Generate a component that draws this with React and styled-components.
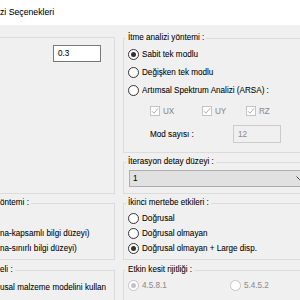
import React from "react";
import styled, { createGlobalStyle } from "styled-components";

const GlobalStyle = createGlobalStyle`
  html, body {
    margin: 0;
    padding: 0;
    background: #f0f0f0;
    overflow: hidden;
  }
  body {
    font-family: "Liberation Sans", Arial, sans-serif;
    font-size: 8.15px;
    color: #000;
    -webkit-text-stroke: 0.06px currentColor;
  }
`;

const Window = styled.div`
  width: 300px;
  height: 300px;
  overflow: hidden;
  background: #f0f0f0;
`;

const TitleBar = styled.div`
  height: 25px;
  box-sizing: border-box;
  background: #fff;
  display: flex;
  align-items: center;
  padding-bottom: 1px;
  font-size: 8.7px;
  white-space: nowrap;
`;

const Body = styled.div`
  display: flex;
  gap: 8px;
  margin-left: -5px;
`;

const Column = styled.div`
  display: flex;
  flex-direction: column;
  flex-shrink: 0;
  width: ${props => props.$w}px;
  padding-top: ${props => props.$top}px;
`;

const Group = styled.fieldset`
  margin: ${props => props.$mt || 0}px 0 0 0;
  padding: ${props => props.$pt || 2}px 5px 0 4px;
  border: 1px solid #dcdcdc;
  height: ${props => props.$h}px;
  box-sizing: border-box;
  min-width: 0;
  overflow: hidden;
`;

const Legend = styled.legend`
  padding: 0 2px;
  margin-left: -2px;
  height: 10px;
  line-height: 10px;
  white-space: nowrap;
`;

const Row = styled.div`
  display: flex;
  align-items: center;
  gap: 3px;
  height: ${props => props.$h || 18}px;
  margin-left: ${props => props.$ml || 0}px;
  margin-top: ${props => props.$mt || 0}px;
  white-space: nowrap;
  color: ${props => props.$disabled ? "#8c8c8c" : "#000"};
`;

const RightRow = styled(Row)`
  justify-content: flex-end;
  padding-right: 8px;
`;

const Grid = styled.div`
  display: grid;
  grid-template-columns: ${props => props.$cols};
  align-items: center;
  height: ${props => props.$h || 18}px;
  margin-left: ${props => props.$ml || 0}px;
  margin-top: ${props => props.$mt || 0}px;
`;

const RadioCircle = styled.span`
  width: 11px;
  height: 11px;
  box-sizing: border-box;
  border-radius: 50%;
  border: 1px solid ${props => props.$disabled ? "#c4c4c4" : "#333"};
  background: #fff;
  display: flex;
  align-items: center;
  justify-content: center;
  flex-shrink: 0;

  &::after {
    content: "";
    display: ${props => props.$checked ? "block" : "none"};
    width: 5px;
    height: 5px;
    border-radius: 50%;
    background: ${props => props.$disabled ? "#c4c4c4" : "#333"};
  }
`;

const CheckBox = styled.span`
  width: 10px;
  height: 10px;
  box-sizing: border-box;
  border: 1px solid #c4c4c4;
  background: #fff;
  display: flex;
  align-items: center;
  justify-content: center;
  flex-shrink: 0;
`;

const Field = styled.div`
  width: 48px;
  height: ${props => props.$h || 18}px;
  box-sizing: border-box;
  border: 1px solid ${props => props.$disabled ? "#cccccc" : "#7a7a7a"};
  background: ${props => props.$disabled ? "#f0f0f0" : "#fff"};
  color: ${props => props.$disabled ? "#8c8c8c" : "#000"};
  display: flex;
  align-items: center;
  padding-left: 4px;
`;

const ModLabel = styled.span`
  width: 83px;
`;

const Select = styled.div`
  width: 178px;
  height: 17px;
  margin-left: 1px;
  box-sizing: border-box;
  border: 1px solid #adadad;
  background: #e1e1e1;
  display: flex;
  align-items: center;
  justify-content: space-between;
  padding: 0 3px 0 3px;
`;

function RadioRow({ h, checked, disabled, children }) {
  return (
    <Row $h={h} $disabled={disabled}>
      <RadioCircle $checked={checked} $disabled={disabled} />
      <span>{children}</span>
    </Row>
  );
}

function Check({ children }) {
  return (
    <Row $disabled>
      <CheckBox>
        <svg width="8" height="8" viewBox="0 0 8 8">
          <polyline points="1,4.2 3,6.2 7,1.5" fill="none" stroke="#b0b0b0" strokeWidth="1" />
        </svg>
      </CheckBox>
      <span>{children}</span>
    </Row>
  );
}

export default function App() {
  return (
    <Window>
      <GlobalStyle />
      <TitleBar>zi Seçenekleri</TitleBar>
      <Body>
        <Column $w={120} $top={12}>
          <Group $h={157} $pt={7}>
            <RightRow $h={17}>
              <Field $h={17}>0.3</Field>
            </RightRow>
          </Group>
          <Group $h={62} $mt={4} $pt={3}>
            <Legend>öntemi :</Legend>
            <Row $h={15} />
            <Row $h={15}>na-kapsamlı bilgi düzeyi)</Row>
            <Row $h={15}>na-sınırlı bilgi düzeyi)</Row>
          </Group>
          <Group $h={50} $mt={5} $pt={3}>
            <Legend>eli :</Legend>
            <Row $h={18}>usal malzeme modelini kullan</Row>
          </Group>
        </Column>

        <Column $w={200} $top={8}>
          <Group $h={120} $pt={2}>
            <Legend>İtme analizi yöntemi :</Legend>
            <RadioRow h={18} checked>Sabit tek modlu</RadioRow>
            <RadioRow h={18}>Değişken tek modlu</RadioRow>
            <RadioRow h={18}>Artımsal Spektrum Analizi (ARSA) :</RadioRow>
            <Grid $cols="52px 44px auto" $ml={22} $mt={3}>
              <Check>UX</Check>
              <Check>UY</Check>
              <Check>RZ</Check>
            </Grid>
            <Row $ml={22} $mt={5} $h={18} style={{ gap: 0 }}>
              <ModLabel>Mod sayısı :</ModLabel>
              <Field $disabled>12</Field>
            </Row>
          </Group>

          <Group $h={37} $mt={4} $pt={3}>
            <Legend>İterasyon detay düzeyi :</Legend>
            <Select>
              <span>1</span>
              <svg width="7" height="5" viewBox="0 0 7 5">
                <polyline points="0.5,0.5 3.5,3.5 6.5,0.5" fill="none" stroke="#444" strokeWidth="1" />
              </svg>
            </Select>
          </Group>

          <Group $h={62} $mt={4} $pt={3}>
            <Legend>İkinci mertebe etkileri :</Legend>
            <RadioRow h={15}>Doğrusal</RadioRow>
            <RadioRow h={15}>Doğrusal olmayan</RadioRow>
            <RadioRow h={15} checked>Doğrusal olmayan + Large disp.</RadioRow>
          </Group>

          <Group $h={50} $mt={5} $pt={3}>
            <Legend>Etkin kesit rijitliği :</Legend>
            <Grid $cols="102px auto" $h={15}>
              <RadioRow h={15} checked disabled>4.5.8.1</RadioRow>
              <RadioRow h={15} disabled>5.4.5.2</RadioRow>
            </Grid>
          </Group>
        </Column>
      </Body>
    </Window>
  );
}
